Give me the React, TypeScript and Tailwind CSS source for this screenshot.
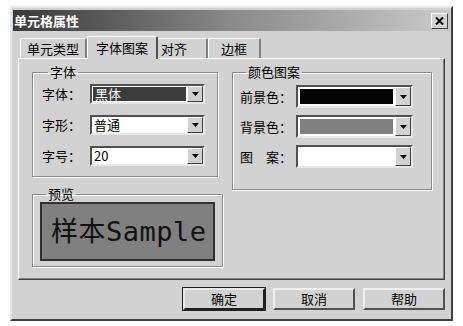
import React from 'react';

const font = { fontFamily: '"Noto Sans CJK SC", "Noto Sans", sans-serif' };

const DropButton: React.FC = () => (
  <div className="w-[16px] h-full bg-[#d2d2d2] border border-t-white border-l-white border-r-[#404040] border-b-[#404040] flex items-center justify-center shrink-0">
    <svg width="7" height="4" viewBox="0 0 7 4">
      <path d="M0 0h7L3.5 4z" fill="#000" />
    </svg>
  </div>
);

const Combo: React.FC<{ text: string; selected?: boolean }> = ({ text, selected }) => (
  <div className="w-[115px] h-[20px] flex bg-white border-2 border-t-[#505050] border-l-[#505050] border-r-[#e8e8e8] border-b-[#e8e8e8]">
    <div
      className={
        selected
          ? 'flex-1 m-[1px] bg-[#3c3c3c] text-white text-[13px] leading-[14px] pl-[2px]'
          : 'flex-1 text-black text-[13px] leading-[16px] pl-[2px]'
      }
    >
      {text}
    </div>
    <DropButton />
  </div>
);

const ColorCombo: React.FC<{ color: string }> = ({ color }) => (
  <div className="w-[117px] h-[23px] flex bg-white border-2 border-t-[#505050] border-l-[#505050] border-r-[#e8e8e8] border-b-[#e8e8e8]">
    <div className="flex-1 p-[2px]">
      <div className="w-full h-full" style={{ background: color }} />
    </div>
    <DropButton />
  </div>
);

const Button: React.FC<{ label: string; primary?: boolean }> = ({ label, primary }) => (
  <div
    className={
      'w-[82px] h-[22px] flex items-center justify-center text-[13px] text-black bg-[#d2d2d2] ' +
      (primary
        ? 'border-2 border-t-[#e8e8e8] border-l-[#e8e8e8] border-r-[#202020] border-b-[#202020] outline outline-1 outline-[#202020]'
        : 'border-2 border-t-[#f0f0f0] border-l-[#f0f0f0] border-r-[#505050] border-b-[#505050]')
    }
  >
    {label}
  </div>
);

export default function App() {
  return (
    <div className="w-[463px] h-[326px] bg-white pt-[6px] pl-[10px]" style={font}>
      <div className="w-[443px] h-[315px] bg-[#d2d2d2] border-2 border-t-[#e6e6e6] border-l-[#e6e6e6] border-r-[#404040] border-b-[#404040] flex flex-col">
        {/* Title bar */}
        <div className="mx-[1px] mt-[2px] h-[21px] bg-linear-to-r from-[#3a3a3a] via-[#8a8a8a] to-[#cacaca] flex items-center justify-between pl-[1px] pr-[2px]">
          <span className="text-white font-bold text-[13px] leading-none">单元格属性</span>
          <div className="w-[17px] h-[16px] bg-[#d2d2d2] border border-t-white border-l-white border-r-[#404040] border-b-[#404040] flex items-center justify-center">
            <svg width="9" height="8" viewBox="0 0 9 8">
              <path d="M1 0.5L8 7.5M8 0.5L1 7.5" stroke="#000" strokeWidth="2" />
            </svg>
          </div>
        </div>

        {/* Tabs */}
        <div className="mt-[4px] h-[23px] flex items-end pl-[6px] text-[13px] text-black">
          <div className="w-[67px] h-[20px] ml-[2px] border-l border-t border-white border-r-2 border-r-[#808080] rounded-t-[2px] flex items-center justify-center">
            单元类型
          </div>
          <div className="w-[71px] h-[23px] -mb-[1px] border-l border-t border-white border-r-2 border-r-[#505050] bg-[#d2d2d2] rounded-t-[2px] flex items-start pt-[1px] justify-center relative z-10">
            字体图案
          </div>
          <div className="w-[50px] h-[20px] border-t border-white border-r-2 border-r-[#808080] rounded-t-[2px] flex items-center pl-[3px]">
            对齐
          </div>
          <div className="w-[53px] h-[20px] border-l border-t border-white border-r-2 border-r-[#808080] rounded-t-[2px] flex items-center pl-[12px]">
            边框
          </div>
        </div>

        {/* Tab panel */}
        <div className="ml-[6px] w-[427px] h-[222px] border border-t-white border-l-white border-r-[#404040] border-b-[#404040] shadow-[inset_-1px_-1px_0_#808080] flex gap-[9px] pl-[13px] pt-[6px] text-[13px] text-black">
          <div className="flex flex-col gap-[10px]">
            <fieldset className="w-[186px] h-[112px] border border-[#8a8a8a] shadow-[inset_1px_1px_0_#fff,1px_1px_0_#fff] px-[9px] pt-[5px]">
              <legend className="ml-[6px] px-[2px] leading-[14px]">字体</legend>
              <div className="flex flex-col gap-[11px]">
                {[
                  ['字体：', '黑体', true],
                  ['字形：', '普通', false],
                  ['字号：', '20', false],
                ].map(([l, v, s]) => (
                  <div key={l as string} className="flex items-center">
                    <span className="w-[48px] leading-[16px]">{l}</span>
                    <Combo text={v as string} selected={s as boolean} />
                  </div>
                ))}
              </div>
            </fieldset>
            <fieldset className="w-[188px] h-[80px] border border-[#8a8a8a] shadow-[inset_1px_1px_0_#fff,1px_1px_0_#fff] px-[7px] pt-[1px]">
              <legend className="ml-[6px] px-[2px] leading-[14px]">预览</legend>
              <div className="w-[175px] h-[59px] bg-[#808080] border-2 border-[#303030] flex items-center pl-[9px]">
                <span
                  className="text-[27px] leading-none text-[#111] tracking-[0.5px]"
                  style={{ fontFamily: '"DejaVu Sans Mono", "Noto Sans CJK SC", monospace' }}
                >
                  样本Sample
                </span>
              </div>
            </fieldset>
          </div>

          <fieldset className="w-[200px] h-[125px] border border-[#8a8a8a] shadow-[inset_1px_1px_0_#fff,1px_1px_0_#fff] pl-[7px] pt-[6px]">
            <legend className="ml-[6px] px-[2px] leading-[14px]">颜色图案</legend>
            <div className="flex flex-col gap-[7px]">
              {[
                ['前景色：', '#050505'],
                ['背景色：', '#808080'],
                ['图\u3000案：', '#ffffff'],
              ].map(([l, c]) => (
                <div key={l} className="flex items-center">
                  <span className="w-[56px] leading-[16px]">{l}</span>
                  <ColorCombo color={c} />
                </div>
              ))}
            </div>
          </fieldset>
        </div>

        {/* Buttons */}
        <div className="mt-[8px] flex justify-end gap-[8px] pr-[6px]">
          <Button label="确定" primary />
          <Button label="取消" />
          <Button label="帮助" />
        </div>
      </div>
    </div>
  );
}
